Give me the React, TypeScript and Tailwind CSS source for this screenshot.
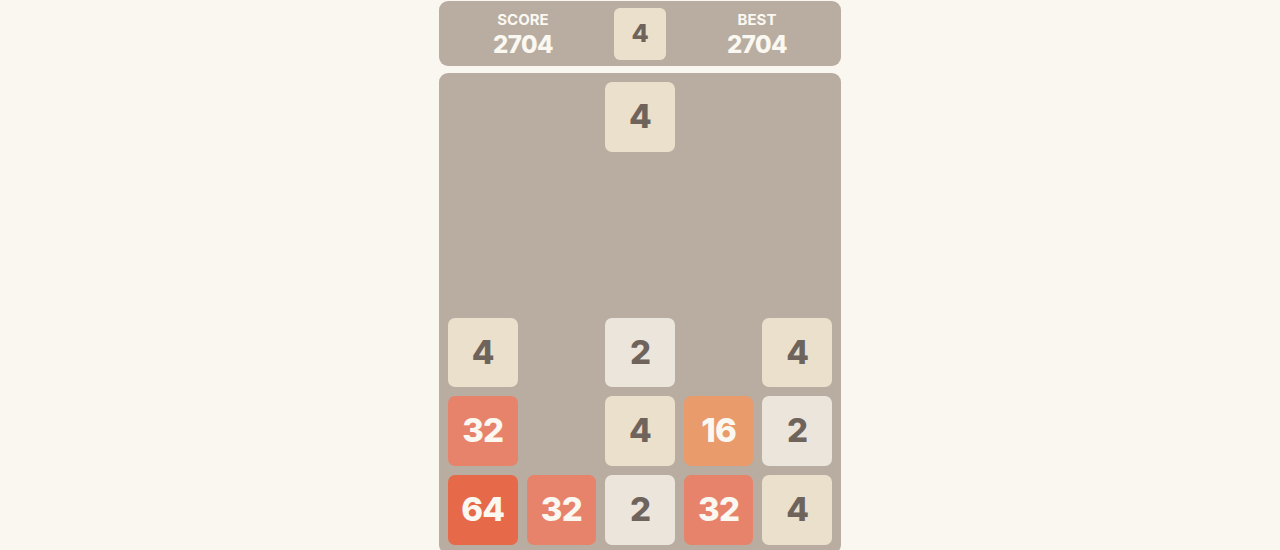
import React from "react";

type Cell = number | null;

const board: Cell[][] = [
  [null, null, 4, null, null],
  [null, null, null, null, null],
  [null, null, null, null, null],
  [4, null, 2, null, 4],
  [32, null, 4, 16, 2],
  [64, 32, 2, 32, 4],
];

const tileStyle: Record<number, string> = {
  2: "bg-[#ece5dc] text-[#6e645c]",
  4: "bg-[#ebe0cc] text-[#6e645c]",
  16: "bg-[#e99b6c] text-[#fbf8f1]",
  32: "bg-[#e8836b] text-[#fbf8f1]",
  64: "bg-[#e6694a] text-[#fbf8f1]",
};

const font = { fontFamily: "Inter, 'DejaVu Sans', sans-serif" };

function Tile({ value }: { value: Cell }) {
  if (value === null) return <div className="aspect-square" />;
  return (
    <div
      className={`aspect-square rounded-[7px] flex items-center justify-center text-[33px] font-extrabold tracking-tight ${tileStyle[value]}`}
    >
      {value}
    </div>
  );
}

function Stat({ label, value }: { label: string; value: number }) {
  return (
    <div className="w-[100px] flex flex-col items-center text-[#fbf8f1]">
      <div className="text-[15px] font-bold leading-none mt-[1px]">{label}</div>
      <div className="text-[24px] font-extrabold leading-none mt-[6px] tracking-tight">{value}</div>
    </div>
  );
}

export default function App() {
  return (
    <div className="min-h-[550px] bg-[#faf7f0] flex justify-center" style={font}>
      <div className="w-[402px] pt-[1px] flex flex-col gap-[7px]">
        <div className="h-[65px] rounded-[9px] bg-[#b9ada1] flex items-center justify-center gap-[41px]">
          <Stat label="SCORE" value={2704} />
          <div className="w-[52px] h-[52px] rounded-[6px] bg-[#ebe0cc] text-[#6e645c] flex items-center justify-center text-[25px] font-extrabold">
            4
          </div>
          <Stat label="BEST" value={2704} />
        </div>
        <div className="rounded-[9px] bg-[#b9ada1] p-[9px] grid grid-cols-5 gap-[9px]">
          {board.flat().map((v, i) => (
            <Tile key={i} value={v} />
          ))}
        </div>
      </div>
    </div>
  );
}
